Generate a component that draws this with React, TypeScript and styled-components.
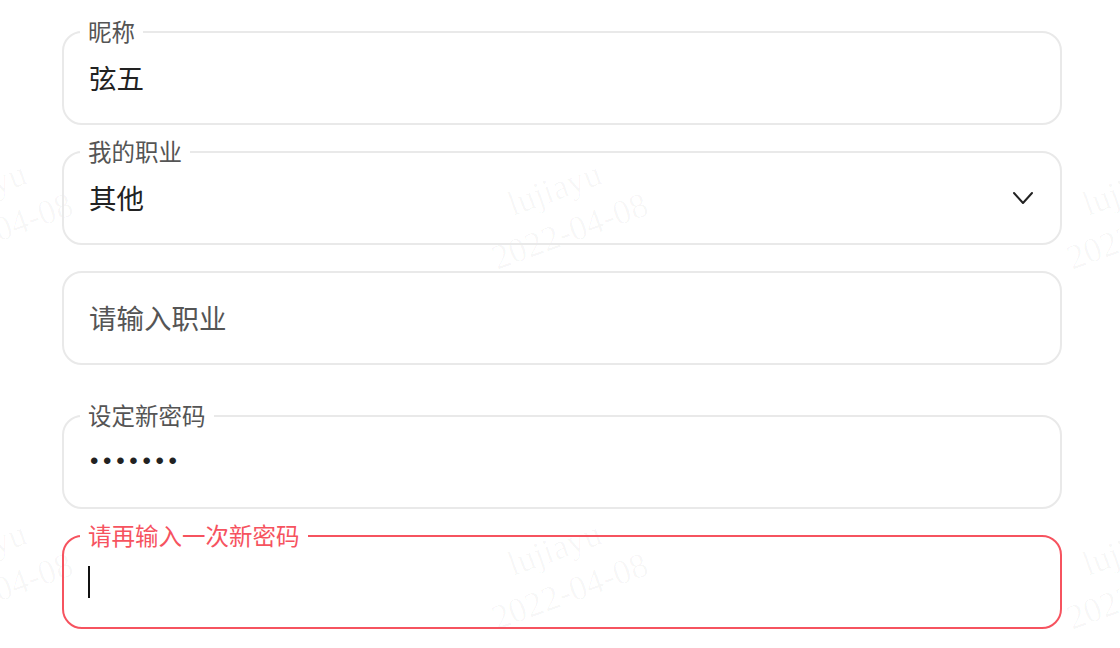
import React from "react";
import styled, { createGlobalStyle } from "styled-components";

const Global = createGlobalStyle`
  html, body { margin: 0; padding: 0; background: #ffffff; }
  body { font-family: "Noto Sans CJK SC", "Noto Sans", sans-serif; overflow: hidden; }
  #root { width: 1120px; height: 648px; }
`;

const Page = styled.div`
  position: relative;
  width: 1120px;
  height: 648px;
  overflow: hidden;
  background: #ffffff;
`;

const WatermarkLayer = styled.div`
  position: absolute;
  inset: 0;
  pointer-events: none;
  z-index: 0;
`;

const Mark = styled.div`
  position: absolute;
  transform: translate(-50%, -50%) rotate(-20deg);
  transform-origin: center center;
  text-align: center;
  font-family: "Liberation Serif", serif;
  font-size: 35px;
  line-height: 45px;
  color: rgba(0, 0, 0, 0.03);
  white-space: nowrap;
`;

const Form = styled.form`
  position: relative;
  z-index: 1;
  display: flex;
  flex-direction: column;
  gap: 26px;
  width: 1000px;
  padding: 31px 0 0 62px;
  margin: 0;
`;

const Field = styled.div<{ $error?: boolean; $spaceAfter?: number }>`
  position: relative;
  box-sizing: border-box;
  height: 94px;
  border: 2px solid ${(p) => (p.$error ? "#f6535f" : "#e9e9e9")};
  border-radius: 20px;
  padding: 0 26px 0 25px;
  display: flex;
  align-items: center;
  margin-bottom: ${(p) => p.$spaceAfter ?? 0}px;
`;

const Label = styled.span<{ $error?: boolean }>`
  position: absolute;
  left: 16px;
  top: -14px;
  padding: 0 8px;
  background: #ffffff;
  font-size: 23.5px;
  line-height: 24px;
  color: ${(p) => (p.$error ? "#f6535f" : "#555555")};
  white-space: nowrap;
`;

const Value = styled.span<{ $placeholder?: boolean }>`
  flex: 1;
  font-size: 27.5px;
  line-height: 36px;
  margin-top: -2px;
  color: ${(p) => (p.$placeholder ? "#555555" : "#222222")};
`;

const Dots = styled.span`
  flex: 1;
  font-family: "Liberation Sans", sans-serif;
  font-size: 24px;
  letter-spacing: 4.7px;
  color: #222222;
  padding-left: 1px;
  line-height: 36px;
  margin-top: -2px;
`;

const Caret = styled.span`
  display: block;
  width: 2px;
  height: 32px;
  margin-left: -1px;
  background: #111111;
`;

const Chevron = styled.svg`
  width: 22px;
  height: 14px;
  flex: none;
`;

const marks: { x: number; y: number }[] = [];
for (const y of [210, 570]) {
  for (const x of [-13, 562, 1137]) marks.push({ x, y });
}

export default function App() {
  return (
    <Page>
      <Global />
      <WatermarkLayer>
        {marks.map((m, i) => (
          <Mark key={i} style={{ left: m.x, top: m.y }}>
            lujiayu
            <br />
            2022-04-08
          </Mark>
        ))}
      </WatermarkLayer>
      <Form onSubmit={(e) => e.preventDefault()}>
        <Field>
          <Label>昵称</Label>
          <Value>弦五</Value>
        </Field>
        <Field>
          <Label>我的职业</Label>
          <Value>其他</Value>
          <Chevron viewBox="0 0 22 14" fill="none">
            <polyline
              points="2,2 11,12 20,2"
              stroke="#222222"
              strokeWidth="2"
              strokeLinecap="round"
              strokeLinejoin="round"
            />
          </Chevron>
        </Field>
        <Field $spaceAfter={24}>
          <Value $placeholder>请输入职业</Value>
        </Field>
        <Field>
          <Label>设定新密码</Label>
          <Dots>•••••••</Dots>
        </Field>
        <Field $error>
          <Label $error>请再输入一次新密码</Label>
          <Caret />
        </Field>
      </Form>
    </Page>
  );
}
